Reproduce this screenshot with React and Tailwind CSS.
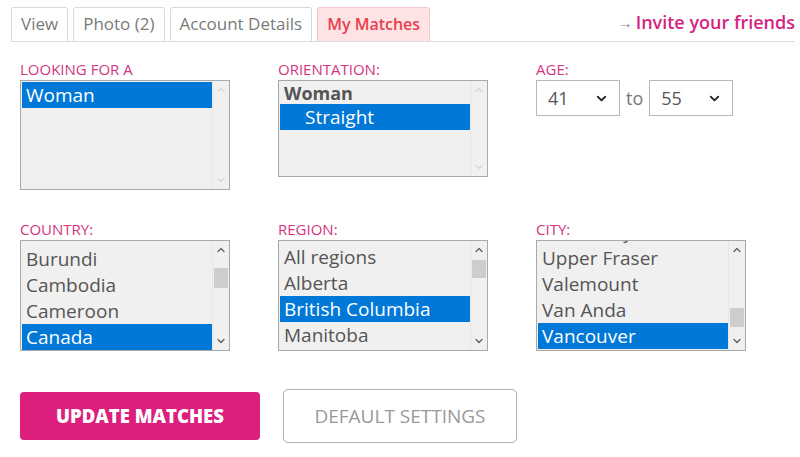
import { ChevronDown, ChevronUp } from "lucide-react";

const font = { fontFamily: '"Open Sans", "Liberation Sans", sans-serif' };

function Scrollbar({ thumbTop, thumbH }) {
  const active = thumbTop != null;
  return (
    <div className="relative w-[17px] shrink-0 bg-[#f0f0f0] border-l border-[#e6e6e6] flex flex-col justify-between items-center py-[3px]">
      <ChevronUp size={12} strokeWidth={active ? 2.6 : 1.6} className={active ? "text-[#606060]" : "text-[#b5b5b5]"} />
      {active && (
        <div
          className="absolute left-[1px] right-[1px] bg-[#cdcdcd]"
          style={{ top: thumbTop, height: thumbH }}
        />
      )}
      <ChevronDown size={12} strokeWidth={active ? 2.6 : 1.6} className={active ? "text-[#606060]" : "text-[#b5b5b5]"} />
    </div>
  );
}

function ListBox({ height, items, thumbTop, thumbH, offset = 0 }) {
  return (
    <div className="flex w-[210px] border border-[#a9a9a9] bg-[#f0f0f0]" style={{ height }}>
      <div className="flex-1 overflow-hidden pl-px pt-px">
        <div style={{ marginTop: offset }}>
          {items.map((it, i) => (
            <div
              key={i}
              className={`whitespace-nowrap ${
                it.sel ? "bg-[#0078d7] text-white" : "text-[#555]"
              } ${it.group ? "font-bold text-[#444] h-[22px] leading-[22px] text-[18px]" : "h-[26px] leading-[26px] text-[19px]"} ${it.indent ? "pl-[25px]" : "pl-[4px]"}`}
            >
              {it.t}
            </div>
          ))}
        </div>
      </div>
      <Scrollbar thumbTop={thumbTop} thumbH={thumbH} />
    </div>
  );
}

function Label({ children }) {
  return <div className="text-[15px] leading-[18px] text-[#d4347f] uppercase mb-[2px]">{children}</div>;
}

function AgeSelect({ value }) {
  return (
    <div className="w-[84px] h-[36px] border border-[#b8b8b8] bg-white flex items-center justify-between pl-[11px] pr-[10px] text-[18px] text-[#555]">
      <span>{value}</span>
      <ChevronDown size={15} strokeWidth={3} className="text-[#222]" />
    </div>
  );
}

const tabs = ["View", "Photo (2)", "Account Details"];

export default function App() {
  return (
    <div className="w-[800px] h-[457px] bg-white overflow-hidden" style={font}>
      {/* Tabs */}
      <div className="flex items-end justify-between ml-[11px] mr-[5px] pt-[7px] border-b border-[#dcdcdc]">
        <div className="flex gap-[5px]">
          {tabs.map((t) => (
            <div
              key={t}
              className="h-[34px] px-[9px] border border-b-0 border-[#d9d9d9] rounded-t-[3px] text-[17px] leading-[32px] text-[#7a7a7a]"
            >
              {t}
            </div>
          ))}
          <div className="h-[34px] px-[9px] border border-b-0 border-[#f2c9c9] rounded-t-[3px] bg-[#fde3e3] text-[16px] leading-[32px] font-semibold text-[#e8404f]">
            My Matches
          </div>
        </div>
        <div className="flex items-center pb-[5px] text-[18px] font-semibold text-[#d4247f]">
          <span className="text-[15px] text-[#888] font-normal mr-[3px]">→</span>
          Invite your friends
        </div>
      </div>

      <div className="pl-[20px]">
        {/* Row 1 */}
        <div className="grid grid-cols-[258px_258px_258px] pt-[18px]">
          <div>
            <Label>Looking for a</Label>
            <ListBox height={110} items={[{ t: "Woman", sel: true }]} />
          </div>
          <div>
            <Label>Orientation:</Label>
            <ListBox height={97} items={[{ t: "Woman", group: true }, { t: "Straight", sel: true, indent: true }]} />
          </div>
          <div>
            <Label>Age:</Label>
            <div className="flex items-center">
              <AgeSelect value="41" />
              <span className="mx-[6px] text-[18px] text-[#777]">to</span>
              <AgeSelect value="55" />
            </div>
          </div>
        </div>

        {/* Row 2 */}
        <div className="grid grid-cols-[258px_258px_258px] pt-[30px]">
          <div>
            <Label>Country:</Label>
            <ListBox
              height={111}
              thumbTop={27}
              thumbH={20}
              offset={4}
              items={[{ t: "Burundi" }, { t: "Cambodia" }, { t: "Cameroon" }, { t: "Canada", sel: true }]}
            />
          </div>
          <div>
            <Label>Region:</Label>
            <ListBox
              height={111}
              thumbTop={19}
              thumbH={18}
              offset={2}
              items={[{ t: "All regions" }, { t: "Alberta" }, { t: "British Columbia", sel: true }, { t: "Manitoba" }]}
            />
          </div>
          <div>
            <Label>City:</Label>
            <ListBox
              height={111}
              thumbTop={67}
              thumbH={19}
              offset={-23}
              items={[{ t: "Union Bay" }, { t: "Upper Fraser" }, { t: "Valemount" }, { t: "Van Anda" }, { t: "Vancouver", sel: true }]}
            />
          </div>
        </div>

        {/* Buttons */}
        <div className="flex items-center gap-[23px] pt-[38px]">
          <button className="w-[240px] h-[48px] rounded-[4px] bg-[#dc1f7c] text-white text-[18.5px] font-extrabold">
            UPDATE MATCHES
          </button>
          <button className="w-[234px] h-[54px] rounded-[5px] border border-[#b0b0b0] bg-white text-[#999] text-[19px]">
            DEFAULT SETTINGS
          </button>
        </div>
      </div>
    </div>
  );
}
